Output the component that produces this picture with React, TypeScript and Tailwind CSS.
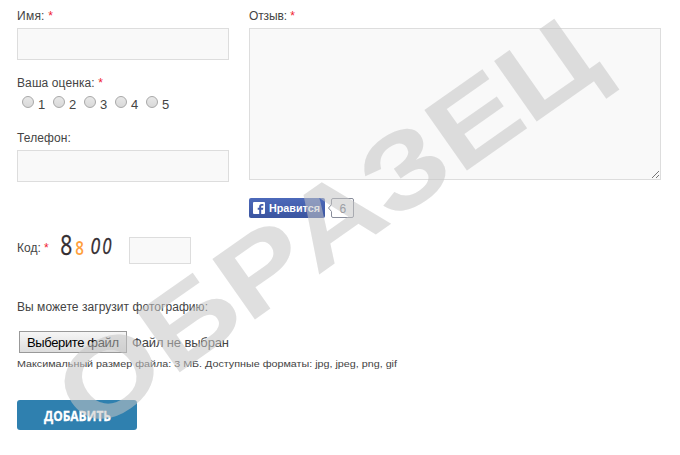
import type { ReactNode } from "react";

function Label({ children, required, tracking = "" }: { children: ReactNode; required?: boolean; tracking?: string }) {
  return (
    <div className={`h-[14px] whitespace-nowrap text-[12px] leading-[14px] ${tracking}`}>
      {children}
      {required && <span className="text-[#f01c30]"> *</span>}
    </div>
  );
}

const box = "block border border-[#dddddd] bg-[#f9f9f9] outline-none";

function Rating() {
  return (
    <div className="mt-[5px] flex h-[16px] pl-[5px]">
      {[1, 2, 3, 4, 5].map((n) => (
        <label key={n} className="flex w-[31px] shrink-0">
          <span className="mt-px h-[12px] w-[12px] rounded-full border border-[#a8a8a8] bg-linear-to-b from-[#e8e8e8] to-[#d9d9d9]" />
          <span className="ml-[4px] mt-[2px] text-[13px] leading-[15px]">{n}</span>
        </label>
      ))}
    </div>
  );
}

function Captcha() {
  return (
    <svg width="60" height="44" viewBox="0 0 60 44" className="-mt-[6px] ml-[10px] shrink-0" fontFamily="'Open Sans', sans-serif">
      <text transform="translate(1.200 29) scale(.78 1)" fontSize="27" fill="#332d31" stroke="#332d31" strokeWidth=".3">8</text>
      <text transform="translate(16.200 29) scale(.76 1)" fontSize="20" fontWeight="600" fill="#ff9f3c">8</text>
      <text transform="translate(31.500 28) scale(.84 1)" fontSize="21" fontStyle="italic" fill="#332d31" stroke="#332d31" strokeWidth=".3">0</text>
      <text transform="translate(43.200 28) scale(.8 1)" fontSize="21" fontStyle="italic" fill="#332d31" stroke="#332d31" strokeWidth=".3">0</text>
    </svg>
  );
}

function Like() {
  return (
    <div className="mt-[18px] flex h-[20px]">
      <div className="flex h-[20px] w-[76px] items-center rounded-[2px] bg-linear-to-b from-[#4c69ba] to-[#3b55a0] pl-[4px]">
        <svg width="12" height="12" viewBox="0 0 12 12" className="shrink-0">
          <rect width="12" height="12" rx="1" fill="#fff" />
          <path d="M6.2 12V7.7H4.7V5.8h1.5V4.6c0-1.8.9-2.7 2.6-2.7h1.6v1.8H9.2c-.8 0-1 .3-1 .9v1.2h2.1l-.3 1.9H8.2V12z" fill="#415bab" />
        </svg>
        <svg width="54" height="16" className="ml-[4px] shrink-0">
          <text x="0" y="12" textLength="51" lengthAdjust="spacingAndGlyphs" fontFamily="'Liberation Sans', Arial, sans-serif" fontSize="11" fontWeight="700" fill="#fff">Нравится</text>
        </svg>
      </div>
      <svg width="28" height="20" viewBox="0 0 28 20" className="ml-[2px]">
        <path d="M4.500 6.5V2q0-1.500 1.500-1.500H25q1.500 0 1.500 1.500V18q0 1.500-1.500 1.500H6q-1.500 0-1.500-1.500v-4.500L1.500 10z" fill="#fff" stroke="#888c9a" />
        <text x="12.500" y="14.500" fontFamily="'Liberation Sans', Arial, sans-serif" fontSize="12" fill="#6a7180">6</text>
      </svg>
    </div>
  );
}

function Upload() {
  return (
    <section className="mt-[29px]">
      <svg width="196" height="18" className="block">
        <text x="0" y="11" textLength="191" fontSize="12" fill="#444">Вы можете загрузит фотографию:</text>
      </svg>
      <div className="mt-[13px] flex h-[22px] items-center pl-[2px]">
        <button className="h-[22px] w-[108px] border border-[#999] bg-linear-to-b from-[#f6f6f6] to-[#dddddd]">
          <svg width="106" height="20" className="block">
            <text x="7" y="15" textLength="92" fontSize="13" fill="#000">Выберите файл</text>
          </svg>
        </button>
        <svg width="104" height="20" className="ml-[5px]">
          <text x="0" y="15" textLength="97" fontSize="13" fill="#444">Файл не выбран</text>
        </svg>
      </div>
      <svg width="390" height="16" className="mt-[3px] block">
        <text x="0" y="11" textLength="380" lengthAdjust="spacingAndGlyphs" fontSize="9.500" fill="#444">Максимальный размер файла: 3 МБ. Доступные форматы: jpg, jpeg, png, gif</text>
      </svg>
    </section>
  );
}

export default function App() {
  return (
    <main className="relative h-[455px] w-[680px] overflow-hidden bg-white pl-[17px] pt-[9px] font-['Liberation_Sans',Arial,sans-serif] text-[#444444]">
      <div className="flex h-[218px] gap-[20px]">
        <section className="w-[212px]">
          <Label required tracking="tracking-[0.25px]">Имя:</Label>
          <input className={`${box} mt-[5px] h-[32px] w-[212px]`} />
          <div className="mt-[16px]"><Label required tracking="tracking-[0.1px]">Ваша оценка:</Label></div>
          <Rating />
          <div className="mt-[20px]"><Label tracking="tracking-[0.12px]">Телефон:</Label></div>
          <input className={`${box} mt-[5px] h-[32px] w-[212px]`} />
        </section>
        <section className="w-[412px]">
          <Label required tracking="-tracking-[0.12px]">Отзыв:</Label>
          <div className={`${box} mt-[5px] flex h-[152px] w-[412px] items-end justify-end pb-px pr-px`}>
            <svg width="7" height="7" viewBox="0 0 7 7" shapeRendering="crispEdges">
              <path d="M0 7L7 0M4 7L7 4" stroke="#555" strokeWidth=".8" />
            </svg>
          </div>
          <Like />
        </section>
      </div>
      <div className="flex h-[44px] pt-[5px]">
        <div className="mt-[9px] w-[32px]"><Label required>Код:</Label></div>
        <Captcha />
        <input className={`${box} ml-[10px] mt-[5px] h-[27px] w-[62px]`} />
      </div>
      <Upload />
      <button className="mt-[28px] block h-[30px] w-[120px] rounded-[3px] bg-[#2f80af]">
        <svg width="120" height="30" className="block">
          <text x="27" y="21" textLength="67" lengthAdjust="spacingAndGlyphs" fontFamily="'Open Sans', sans-serif" fontSize="15" fontWeight="700" fill="#fff" stroke="#fff" strokeWidth=".3">ДОБАВИТЬ</text>
        </svg>
      </button>
      <svg width="680" height="455" className="pointer-events-none absolute left-0 top-0">
        <text transform="translate(104.800 425) rotate(-35.100) scale(1.220 1)" x="-15.9 67.9 143.2 212.1 287.7 355.7 425.4" y="0" fontFamily="'Liberation Sans', Arial, sans-serif" fontSize="107.500" fontWeight="700" fill="#c5c5c5" fillOpacity=".55">ОБРАЗЕЦ</text>
      </svg>
    </main>
  );
}
